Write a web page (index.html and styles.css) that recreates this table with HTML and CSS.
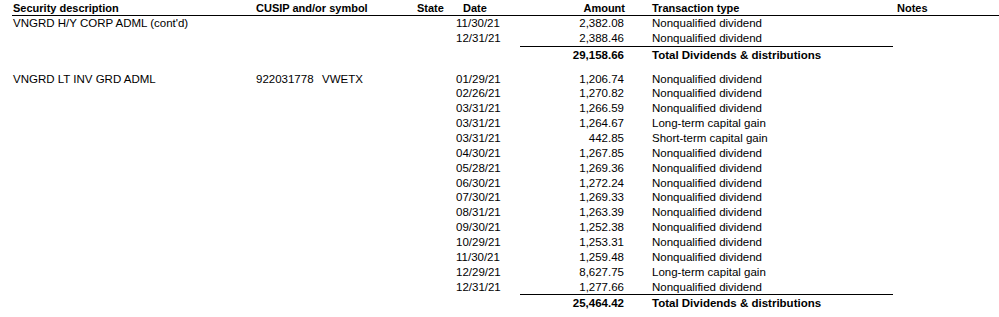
FILE: index.html
```html
<!DOCTYPE html>
<html>
<head>
<meta charset="utf-8">
<link rel="stylesheet" href="styles.css">
</head>
<body>
<div class="report">
  <div class="row head">
    <div class="c-desc">Security description</div>
    <div class="c-cusip span2">CUSIP and/or symbol</div>
    <div class="c-state">State</div>
    <div class="c-date">Date</div>
    <div class="c-amt">Amount</div>
    <div class="c-type">Transaction type</div>
    <div class="c-notes">Notes</div>
  </div>

  <div class="group first">
    <div class="row"><div class="c-desc">VNGRD H/Y CORP ADML (cont'd)</div><div></div><div></div><div></div><div class="c-date">11/30/21</div><div class="c-amt">2,382.08</div><div class="c-type">Nonqualified dividend</div></div>
    <div class="row"><div class="c-desc"></div><div></div><div></div><div></div><div class="c-date">12/31/21</div><div class="c-amt">2,388.46</div><div class="c-type">Nonqualified dividend</div></div>
    <div class="rule"></div>
    <div class="row total"><div></div><div></div><div></div><div></div><div></div><div class="c-amt">29,158.66</div><div class="c-type">Total Dividends &amp; distributions</div></div>
  </div>

  <div class="group second">
    <div class="row"><div class="c-desc">VNGRD LT INV GRD ADML</div><div>922031778</div><div>VWETX</div><div></div><div class="c-date">01/29/21</div><div class="c-amt">1,206.74</div><div class="c-type">Nonqualified dividend</div></div>
    <div class="row"><div></div><div></div><div></div><div></div><div class="c-date">02/26/21</div><div class="c-amt">1,270.82</div><div class="c-type">Nonqualified dividend</div></div>
    <div class="row"><div></div><div></div><div></div><div></div><div class="c-date">03/31/21</div><div class="c-amt">1,266.59</div><div class="c-type">Nonqualified dividend</div></div>
    <div class="row"><div></div><div></div><div></div><div></div><div class="c-date">03/31/21</div><div class="c-amt">1,264.67</div><div class="c-type">Long-term capital gain</div></div>
    <div class="row"><div></div><div></div><div></div><div></div><div class="c-date">03/31/21</div><div class="c-amt">442.85</div><div class="c-type">Short-term capital gain</div></div>
    <div class="row"><div></div><div></div><div></div><div></div><div class="c-date">04/30/21</div><div class="c-amt">1,267.85</div><div class="c-type">Nonqualified dividend</div></div>
    <div class="row"><div></div><div></div><div></div><div></div><div class="c-date">05/28/21</div><div class="c-amt">1,269.36</div><div class="c-type">Nonqualified dividend</div></div>
    <div class="row"><div></div><div></div><div></div><div></div><div class="c-date">06/30/21</div><div class="c-amt">1,272.24</div><div class="c-type">Nonqualified dividend</div></div>
    <div class="row"><div></div><div></div><div></div><div></div><div class="c-date">07/30/21</div><div class="c-amt">1,269.33</div><div class="c-type">Nonqualified dividend</div></div>
    <div class="row"><div></div><div></div><div></div><div></div><div class="c-date">08/31/21</div><div class="c-amt">1,263.39</div><div class="c-type">Nonqualified dividend</div></div>
    <div class="row"><div></div><div></div><div></div><div></div><div class="c-date">09/30/21</div><div class="c-amt">1,252.38</div><div class="c-type">Nonqualified dividend</div></div>
    <div class="row"><div></div><div></div><div></div><div></div><div class="c-date">10/29/21</div><div class="c-amt">1,253.31</div><div class="c-type">Nonqualified dividend</div></div>
    <div class="row"><div></div><div></div><div></div><div></div><div class="c-date">11/30/21</div><div class="c-amt">1,259.48</div><div class="c-type">Nonqualified dividend</div></div>
    <div class="row"><div></div><div></div><div></div><div></div><div class="c-date">12/29/21</div><div class="c-amt">8,627.75</div><div class="c-type">Long-term capital gain</div></div>
    <div class="row"><div></div><div></div><div></div><div></div><div class="c-date">12/31/21</div><div class="c-amt">1,277.66</div><div class="c-type">Nonqualified dividend</div></div>
    <div class="rule"></div>
    <div class="row total"><div></div><div></div><div></div><div></div><div></div><div class="c-amt">25,464.42</div><div class="c-type">Total Dividends &amp; distributions</div></div>
  </div>
</div>
</body>
</html>
```

FILE: styles.css
```css
html, body {
  margin: 0;
  padding: 0;
  background: #ffffff;
}

body {
  font-family: "Liberation Sans", Arial, sans-serif;
  font-size: 11px;
  color: #000000;
  width: 999px;
  height: 317px;
  overflow: hidden;
}

.report {
  margin-left: 12px;
}

.row {
  display: grid;
  grid-template-columns: 244px 66px 95px 39px 84px 84px 273px 1fr;
  font-size: 11.5px;
  line-height: 14.86px;
  height: 14.86px;
  white-space: nowrap;
}

.row > div:first-child {
  padding-left: 1px;
}

.head {
  font-size: 11px;
  font-weight: bold;
  height: 13px;
  line-height: 13px;
  padding-top: 2px;
  border-bottom: 1px solid #000000;
}

.head .span2 {
  grid-column: span 2;
}

.head .c-date {
  padding-left: 7px;
}

.head .c-amt {
  margin-right: -1px;
}

.c-amt {
  text-align: right;
}

.c-type {
  padding-left: 28px;
}

.rule {
  margin-left: 508px;
  width: 373px;
  height: 1px;
  background: #000000;
}

.total {
  font-weight: bold;
  margin-top: 1px;
}

.group.second {
  margin-top: 9px;
}
```
